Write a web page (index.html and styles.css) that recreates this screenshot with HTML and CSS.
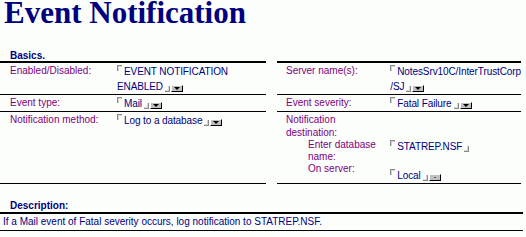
FILE: index.html
```html
<!DOCTYPE html>
<html lang="en">
<head>
  <meta charset="UTF-8">
  <title>Event Notification</title>
  <link rel="stylesheet" href="styles.css">
</head>
<body>
  <h1 class="title">Event Notification</h1>

  <div class="section-head">Basics.</div>
  <div class="basics">
    <table class="fields left">
      <tr>
        <td class="label">Enabled/Disabled:</td>
        <td class="value"><span class="ms"></span>EVENT NOTIFICATION<br>ENABLED<span class="me"></span><span class="drop"></span></td>
      </tr>
      <tr>
        <td class="label">Event type:</td>
        <td class="value"><span class="ms"></span>Mail<span class="me"></span><span class="drop"></span></td>
      </tr>
      <tr class="last">
        <td class="label">Notification method:</td>
        <td class="value"><span class="ms"></span>Log to a database<span class="me"></span><span class="drop"></span></td>
      </tr>
    </table>

    <table class="fields right">
      <tr>
        <td class="label">Server name(s):</td>
        <td class="value"><span class="ms"></span>NotesSrv10C/InterTrustCorp<br>/SJ<span class="me"></span><span class="drop"></span></td>
      </tr>
      <tr>
        <td class="label">Event severity:</td>
        <td class="value"><span class="ms"></span>Fatal Failure<span class="me"></span><span class="drop"></span></td>
      </tr>
      <tr>
        <td class="label">Notification<br>destination:</td>
        <td class="value"></td>
      </tr>
      <tr class="sub">
        <td class="label">Enter database<br>name:</td>
        <td class="value"><span class="ms"></span>STATREP.NSF<span class="me"></span></td>
      </tr>
      <tr class="sub">
        <td class="label">On server:</td>
        <td class="value low"><span class="ms"></span>Local<span class="me"></span><span class="drop small"></span></td>
      </tr>
    </table>
  </div>

  <div class="section-head desc-head">Description:</div>
  <div class="desc">If a Mail event of Fatal severity occurs, log notification to STATREP.NSF.</div>
</body>
</html>
```

FILE: styles.css
```css
body {
  margin: 0;
  background: #fcfefc;
  font-family: "Liberation Sans", Arial, sans-serif;
  font-size: 10px;
  color: #000080;
}
.title {
  margin: 0 0 24px 0;
  padding-left: 4px;
  font-family: "Liberation Serif", "Times New Roman", serif;
  font-size: 31px;
  line-height: 26px;
  font-weight: bold;
  color: #000080;
}
.section-head {
  padding-left: 10px;
  font-weight: bold;
  line-height: 11px;
  color: #000080;
}
.basics {
  display: flex;
  align-items: flex-start;
  gap: 11px;
}

/* two field tables */
.fields {
  border-collapse: collapse;
  border-top: 2px solid #000;
  border-bottom: 1px solid #000;
}
.fields td {
  vertical-align: top;
  padding: 1px 0 0 0;
}
.fields tr + tr td {
  border-top: 1px solid #000;
}
.fields tr.sub td {
  border-top: none;
  padding-top: 0;
}
.left {
  width: 266px;
}
.right {
  width: 244px;
}
.fields td.label {
  color: #800080;
  line-height: 13px;
}
.left td.label {
  width: 107px;
  padding-left: 10px;
}
.right td.label {
  width: 102px;
  padding-left: 9px;
}
.right tr.sub td.label {
  padding-left: 31px;
  line-height: 12px;
}
.value {
  color: #000080;
  line-height: 15px;
  white-space: nowrap;
  letter-spacing: -0.1px;
}
.fields tr.sub td.low {
  padding-top: 5px;
}
.left tr.last td {
  height: 70px;
}

/* field markers and dropdown buttons */
.ms {
  display: inline-block;
  width: 4px;
  height: 5px;
  border-top: 1px solid #8a8a8a;
  border-left: 1px solid #8a8a8a;
  box-shadow: inset 1px 1px 0 #d4d4d4;
  vertical-align: top;
  margin: 1px 2px 0 0;
}
.me {
  display: inline-block;
  width: 4px;
  height: 5px;
  border-right: 1px solid #8a8a8a;
  border-bottom: 1px solid #8a8a8a;
  box-shadow: inset -1px -1px 0 #d4d4d4;
  vertical-align: -2px;
  margin-left: 2px;
}
.drop {
  display: inline-block;
  position: relative;
  width: 10px;
  height: 5px;
  background: #c0c0c0;
  border-top: 1px solid #fff;
  border-left: 1px solid #fff;
  border-right: 1px solid #000;
  border-bottom: 1px solid #000;
  vertical-align: -2px;
  margin-left: 1px;
}
.drop::after {
  content: "";
  position: absolute;
  left: 2px;
  top: 1px;
  border-left: 3px solid transparent;
  border-right: 3px solid transparent;
  border-top: 3px solid #000;
}
.drop.small::after {
  left: 4px;
  top: 2px;
  border-left-width: 1px;
  border-right-width: 1px;
  border-top-width: 1px;
}

.desc-head {
  margin-top: 16px;
  border-bottom: 2px solid #000;
  width: 513px;
  line-height: 12px;
}
.desc {
  width: 520px;
  padding: 1px 0 2px 3px;
  line-height: 13px;
  border-bottom: 1px solid #000;
  color: #000080;
}
```
